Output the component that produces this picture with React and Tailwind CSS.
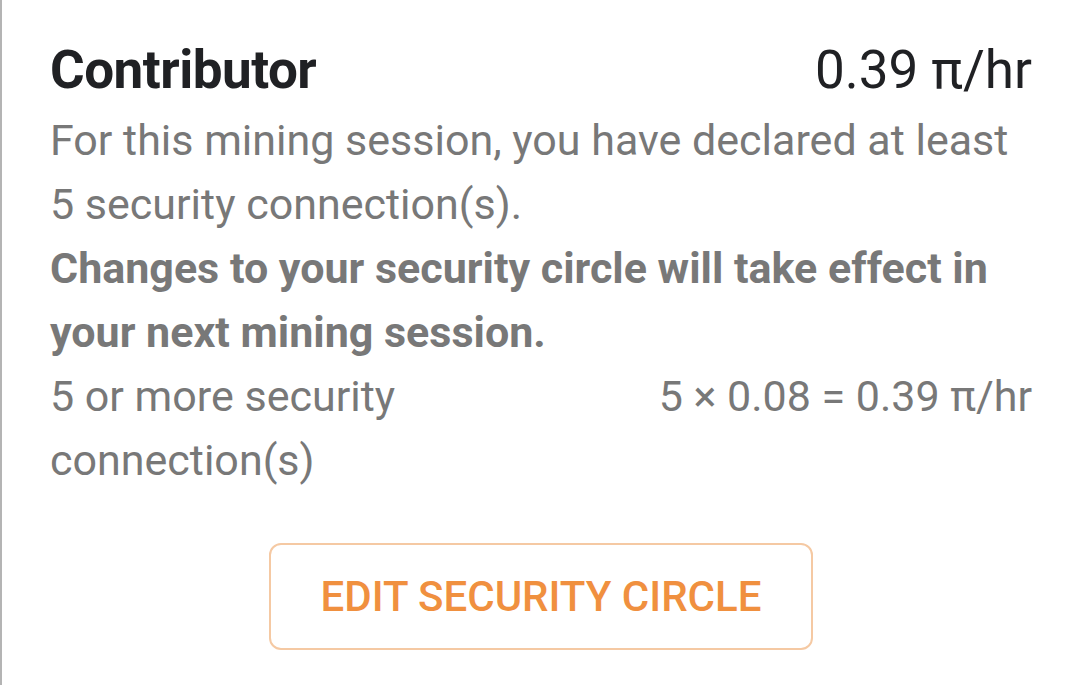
export default function App() {
  const font = { fontFamily: "Roboto, 'Noto Sans', sans-serif" };
  return (
    <div className="w-[1080px] h-[685px] bg-white border-l-2 border-[#b4b4b4] overflow-hidden" style={font}>
      <div className="pl-[48px] pr-[48px] pt-[38px]">
        <div className="flex justify-between items-baseline h-[64px] leading-[64px]">
          <div className="text-[53px] font-bold text-[#202124] tracking-[-0.5px]">Contributor</div>
          <div className="text-[53px] text-[#202124]">0.39 π/hr</div>
        </div>
        <div className="mt-[6px] text-[43px] leading-[64px] text-[#787878]">
          <p>For this mining session, you have declared at least 5 security connection(s).</p>
          <p className="font-bold">Changes to your security circle will take effect in your next mining session.</p>
          <div className="flex justify-between gap-4">
            <div className="flex-1 min-w-0">5 or more security connection(s)</div>
            <div className="whitespace-nowrap">5 × 0.08 = 0.39 π/hr</div>
          </div>
        </div>
        <div className="flex justify-center mt-[51px]">
          <button className="w-[544px] h-[107px] rounded-[12px] border-2 border-[#f5c9a3] text-[#f0903f] text-[42px] font-medium flex items-center justify-center">
            EDIT SECURITY CIRCLE
          </button>
        </div>
      </div>
    </div>
  );
}
